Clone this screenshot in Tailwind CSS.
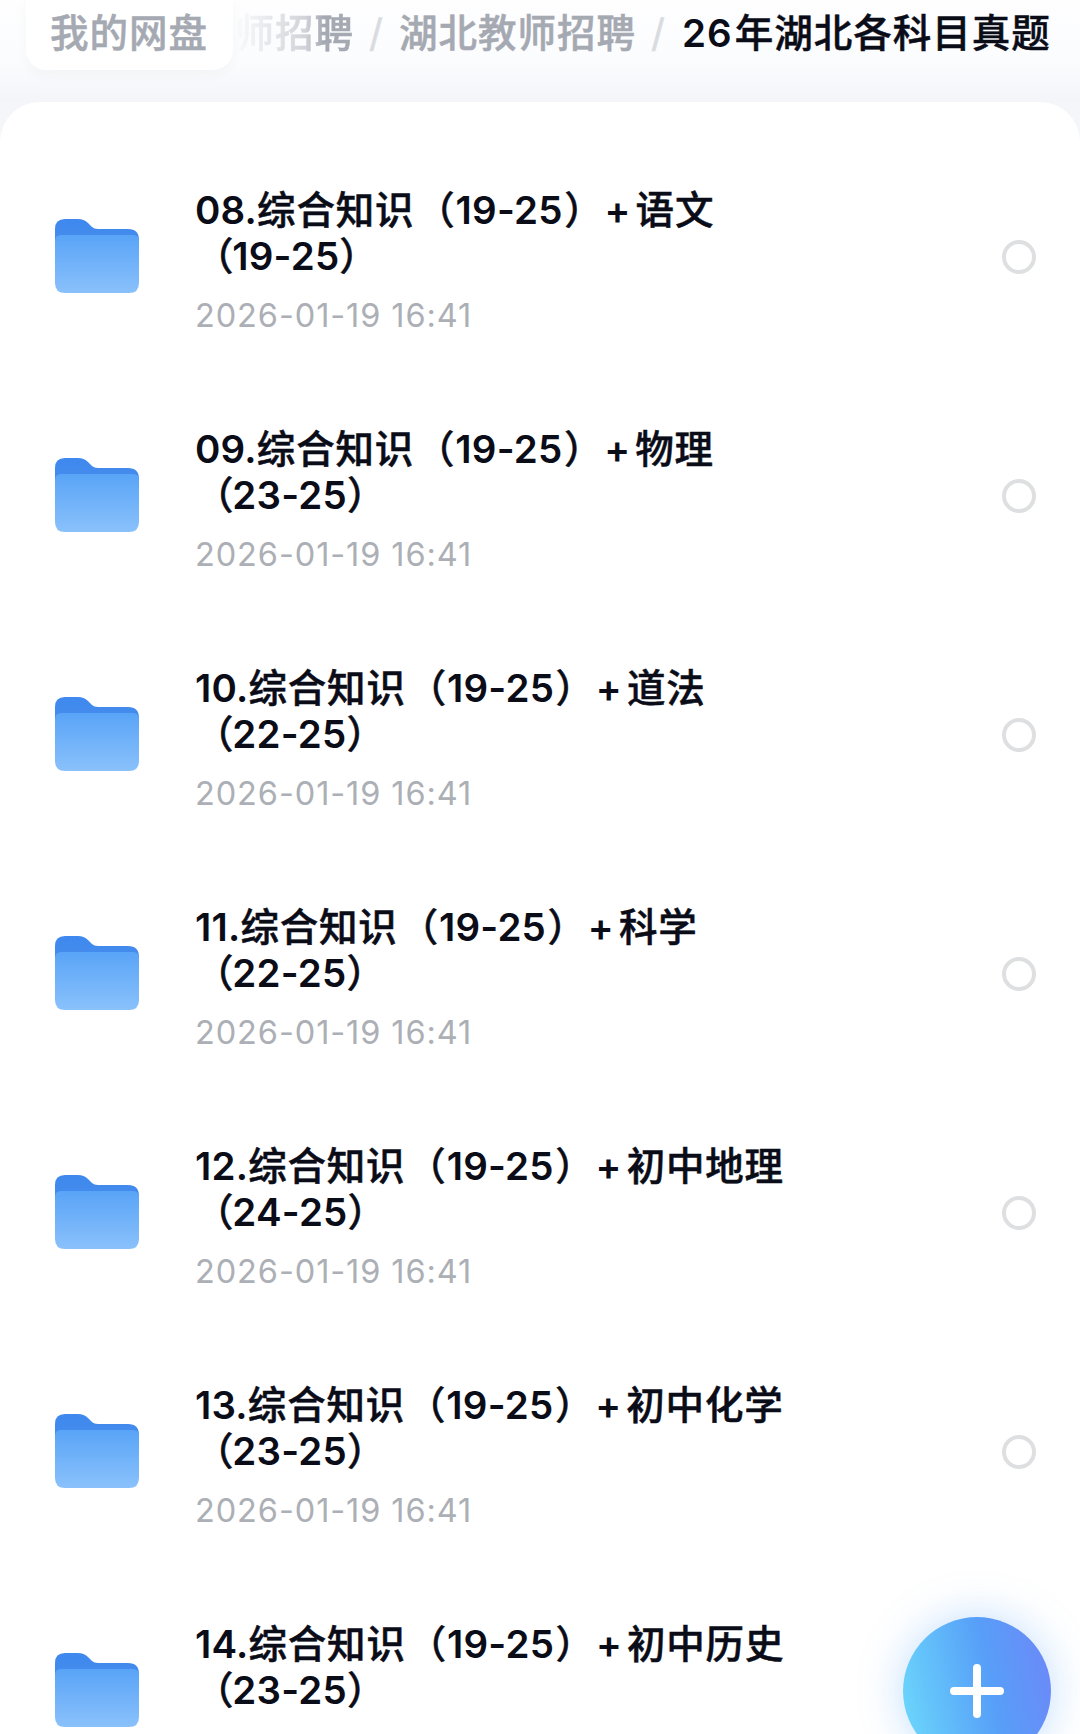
<!DOCTYPE html>
<html lang="zh-CN">
<head>
<meta charset="utf-8">
<title>我的网盘</title>
<script src="https://cdn.jsdelivr.net/npm/@tailwindcss/browser@4"></script>
</head>
<body class="h-[1734px] w-[1080px] overflow-hidden bg-[#f5f6fa] font-[Inter,'Noto_Sans_CJK_SC',sans-serif] text-[#0a0c18] [text-spacing-trim:space-all]">
<div class="flex h-full flex-col">
  <header class="h-[102px] shrink-0 bg-linear-to-b from-[#fefeff] via-[#fbfcfe] via-60% to-[#f4f5f9]">
    <nav class="flex h-[70px] items-center text-[38.5px] leading-[46px] font-medium tracking-[1px] whitespace-nowrap text-[#a5a9b2] [-webkit-text-stroke:0.5px_currentColor]">
      <div class="ml-[26px] flex h-full w-[207px] shrink-0 items-center justify-center rounded-b-[20px] bg-white pr-px pb-[4px] shadow-[0_4px_12px_rgba(60,70,60,0.04)]">我的网盘</div>
      <div class="flex w-[121px] justify-end overflow-hidden pb-[4px] [mask-image:linear-gradient(to_right,transparent,rgba(0,0,0,0.5)_60%,black_75%)]"><span>师招聘</span></div>
      <span class="w-[45px] pb-[4px] text-center font-normal text-[#d9dbdf]">/</span>
      <span class="pb-[4px]">湖北教师招聘</span>
      <span class="w-[45px] pb-[4px] text-center font-normal text-[#d9dbdf]">/</span>
      <span class="ml-px pb-[4px] text-[#0a0c18]"><span class="mr-[2px] font-semibold [-webkit-text-stroke:0px]">26</span>年湖北各科目真题</span>
    </nav>
  </header>
  <main id="list" class="flex-1 overflow-hidden rounded-t-[40px] bg-white pt-[35px]"></main>
</div>
<button aria-label="新建" class="absolute top-[1617px] left-[903px] flex size-[148px] items-center justify-center rounded-full bg-linear-[78deg,#6ad3fb_8%,#579ff8_58%,#6a8bf8_92%] shadow-[0_0_44px_rgba(80,160,250,0.35)]">
  <svg class="size-[56px]" viewBox="0 0 56 56" fill="none" stroke="white" stroke-width="8" stroke-linecap="round"><path d="M28 5v46M5 28h46"/></svg>
</button>
<svg class="absolute size-0">
  <defs>
    <linearGradient id="back" x1="0" y1="0" x2="0" y2="1"><stop offset="0" stop-color="#3e88ef"/><stop offset=".3" stop-color="#438bec"/></linearGradient>
    <linearGradient id="front" x1="0" y1="0" x2="0" y2="1"><stop offset="0" stop-color="#59a4f7"/><stop offset="1" stop-color="#8ac1fb"/></linearGradient>
  </defs>
</svg>
<script>
const files = [
  ['08.', '语文', '19-25'], ['09.', '物理', '23-25'], ['10.', '道法', '22-25'], ['11.', '科学', '22-25'],
  ['12.', '初中地理', '24-25'], ['13.', '初中化学', '23-25'], ['14.', '初中历史', '23-25'],
];
const cjk = (text) => `<span class="font-medium tracking-[0.8px] [-webkit-text-stroke:0.5px_currentColor]">${text}</span>`;
document.getElementById('list').innerHTML = files.map(([no, subject, years]) => `
  <div class="flex h-[239px] items-center pr-[44px] pl-[55px]">
    <svg class="-mt-px h-[74px] w-[84px] shrink-0" viewBox="0 0 84 74">
      <path fill="url(#back)" d="M0 10Q0 0 10 0H23Q29 0 33 4L37 8Q39 10 43 10H73Q84 10 84 21V50H0Z"/>
      <path fill="url(#front)" d="M0 22Q0 16 6 16H78Q84 16 84 22V64Q84 74 74 74H10Q0 74 0 64Z"/>
    </svg>
    <div class="ml-[56px] flex-1 pt-[9px]">
      <div class="text-[38.5px] leading-[46px] font-semibold tracking-[0.2px]">
        <div>${no}${cjk('综合知识')}<span class="ml-[2px]">${cjk('（')}</span>19-25<span class="ml-[1.5px]">${cjk('）')}</span><span class="mr-[5px] ml-[1px]">+</span>${cjk(subject)}</div>
        <div>${cjk('（')}<span class="-ml-[2px]">${years}</span>${cjk('）')}</div>
      </div>
      <div class="mt-[17px] text-[32.5px] leading-[40px] tracking-[0.9px] text-[#acafb5]">2026-01-19 16:41</div>
    </div>
    <span class="size-[34px] rounded-full border-4 border-[#dedfe1]"></span>
  </div>`).join('');
</script>
</body>
</html>
